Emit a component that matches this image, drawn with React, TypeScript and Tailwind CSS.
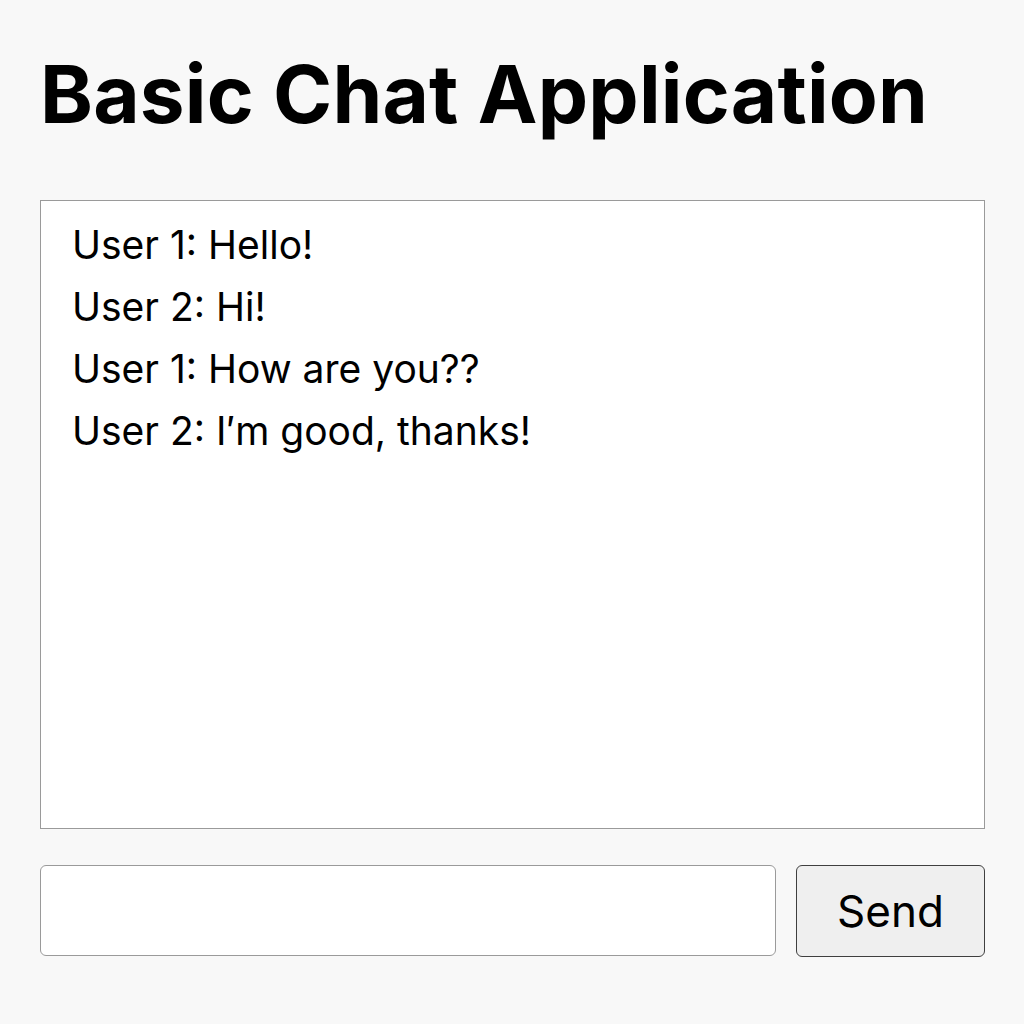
import { useState } from "react"

const initialMessages = [
  "User 1: Hello!",
  "User 2: Hi!",
  "User 1: How are you??",
  "User 2: I\u2032m good, thanks!",
]

export default function App() {
  const [messages, setMessages] = useState(initialMessages)
  const [draft, setDraft] = useState("")

  const send = () => {
    if (!draft.trim()) return
    setMessages((prev) => [...prev, `User 1: ${draft}`])
    setDraft("")
  }

  return (
    <div className="min-h-screen bg-[#f8f8f8] px-10 pt-[54px] font-['Inter',sans-serif] text-black">
      <h1 className="text-[80px] font-bold leading-none tracking-[0.2px]">Basic Chat Application</h1>

      <div className="mt-[66px] h-[629px] w-[945px] border border-[#9a9a9a] bg-white px-[31px] pt-[13px]">
        {messages.map((m, i) => (
          <p key={i} className="text-[39px] leading-[62px]">
            {m}
          </p>
        ))}
      </div>

      <div className="mt-9 flex w-[945px] gap-5">
        <input
          value={draft}
          onChange={(e) => setDraft(e.target.value)}
          onKeyDown={(e) => e.key === "Enter" && send()}
          className="h-[91px] flex-1 rounded-md border border-[#9a9a9a] bg-white px-4 text-[36px] outline-none"
        />
        <button
          onClick={send}
          className="h-[92px] w-[189px] rounded-md border border-[#3f3f3f] bg-[#efefef] text-[44px]"
        >
          Send
        </button>
      </div>
    </div>
  )
}
